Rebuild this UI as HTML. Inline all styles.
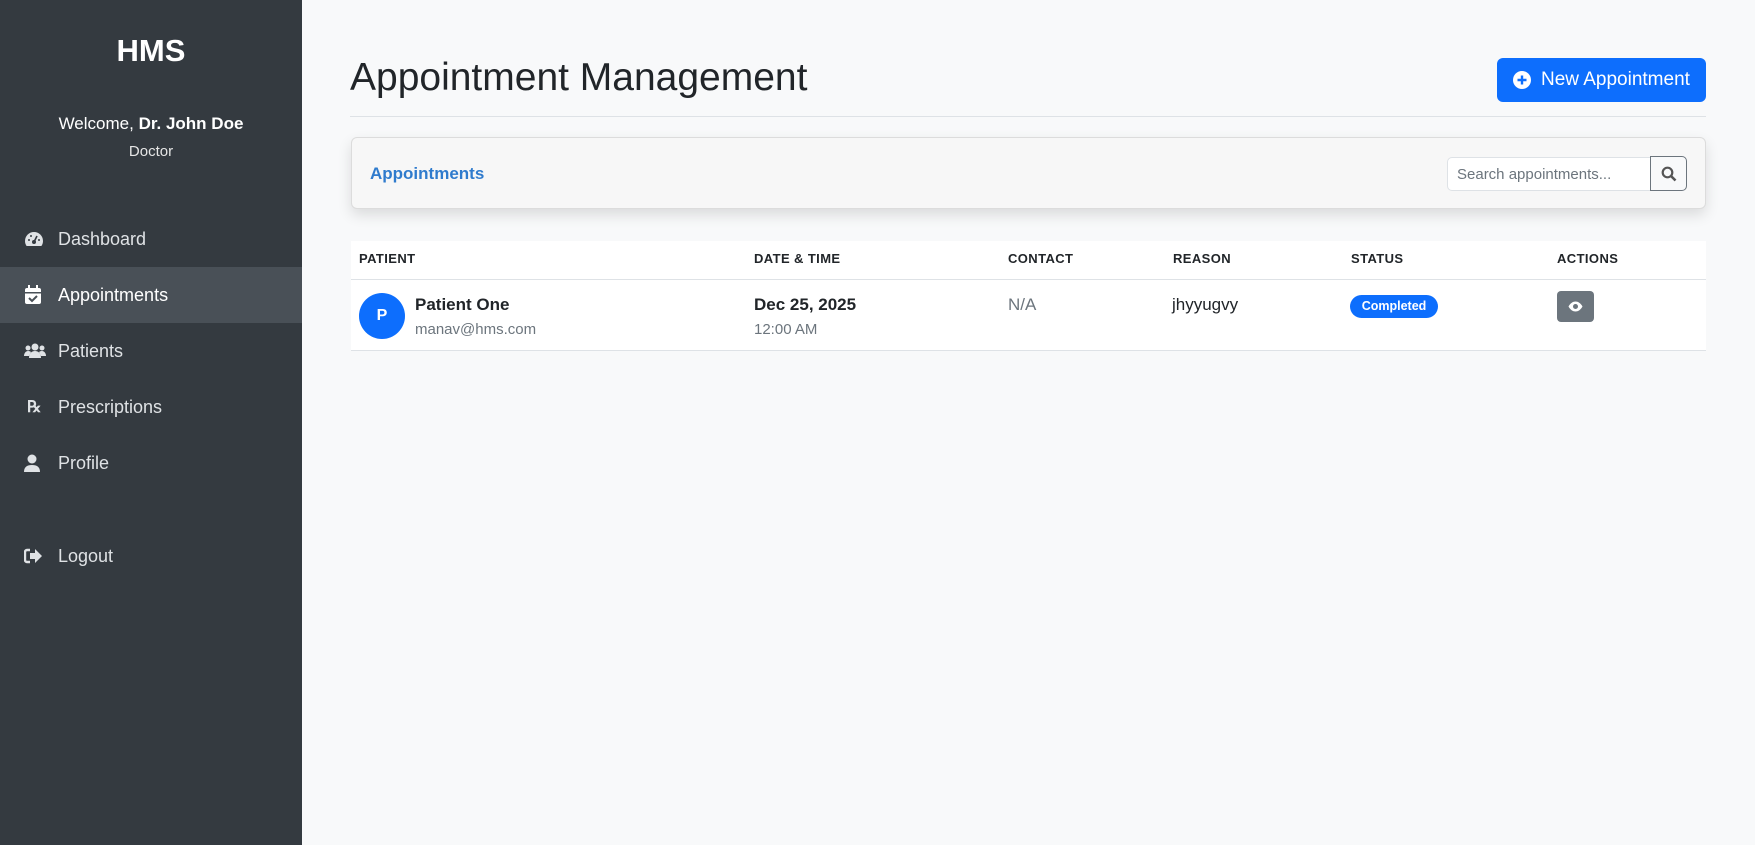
<!DOCTYPE html>
<html><head><meta charset="utf-8"><style>
*{box-sizing:border-box;margin:0;padding:0}
body{width:1755px;height:845px;font-family:"Liberation Sans",sans-serif;background:#f8f9fa;position:relative;overflow:hidden;color:#212529}
.sb{position:absolute;left:0;top:0;width:302px;height:845px;background:#343a40;color:#fff}
.abs{position:absolute}
.nav{position:absolute;left:0;width:302px;height:56px;display:flex;align-items:center;font-size:18px;color:#dfe2e5}
.nav svg{position:absolute;left:24px}
.nav span{position:absolute;left:58px}
.th{position:absolute;top:251px;font-size:13px;font-weight:bold;letter-spacing:.4px}
</style></head><body>
<div class="sb">
 <div class="abs" style="left:0;width:302px;top:33px;text-align:center;font-size:31px;font-weight:bold">HMS</div>
 <div class="abs" style="left:0;width:302px;top:114px;text-align:center;font-size:17px">Welcome, <b>Dr. John Doe</b></div>
 <div class="abs" style="left:0;width:302px;top:143px;text-align:center;font-size:15px;color:#e6e6e6">Doctor</div>
 <div class="nav" style="top:211px"><svg width="20" height="18" viewBox="0 0 20 18"><path d="M10 2a9 9 0 0 0-9 9c0 2 .6 3.6 1.6 5h14.8c1-1.4 1.6-3 1.6-5a9 9 0 0 0-9-9z" fill="#dfe2e5"/><circle cx="10" cy="12" r="2" fill="#343a40"/><path d="M10 12l3-6" stroke="#343a40" stroke-width="1.6"/><circle cx="5" cy="10" r="1" fill="#343a40"/><circle cx="7" cy="6" r="1" fill="#343a40"/><circle cx="15" cy="10" r="1" fill="#343a40"/></svg><span>Dashboard</span></div>
 <div class="nav" style="top:267px;background:#495057;color:#fff"><svg width="18" height="20" viewBox="0 0 18 20"><rect x="4" y="0" width="2" height="4" fill="#fff"/><rect x="12" y="0" width="2" height="4" fill="#fff"/><rect x="1" y="3" width="16" height="16" rx="2" fill="#fff"/><rect x="1" y="7" width="16" height="1.5" fill="#495057"/><path d="M5 13l3 3 5-5" stroke="#495057" stroke-width="2" fill="none"/></svg><span>Appointments</span></div>
 <div class="nav" style="top:323px"><svg width="22" height="16" viewBox="0 0 22 16"><circle cx="11" cy="4" r="3.5" fill="#dfe2e5"/><circle cx="4" cy="5" r="2.5" fill="#dfe2e5"/><circle cx="18" cy="5" r="2.5" fill="#dfe2e5"/><path d="M5 15c0-5 3-7 6-7s6 2 6 7z" fill="#dfe2e5"/><path d="M0 13c0-3 2-5 4-5s3 1 3 1l-2 4z" fill="#dfe2e5"/><path d="M22 13c0-3-2-5-4-5s-3 1-3 1l2 4z" fill="#dfe2e5"/></svg><span>Patients</span></div>
 <div class="nav" style="top:379px"><span style="left:27px;font-weight:bold;font-size:16px">℞</span><span>Prescriptions</span></div>
 <div class="nav" style="top:435px"><svg width="16" height="18" viewBox="0 0 16 18"><circle cx="8" cy="5" r="4.5" fill="#dfe2e5"/><path d="M0 18c0-5 3-7 8-7s8 2 8 7z" fill="#dfe2e5"/></svg><span>Profile</span></div>
 <div class="nav" style="top:528px"><svg width="18" height="16" viewBox="0 0 18 16"><path d="M6 2H3a2 2 0 0 0-2 2v8a2 2 0 0 0 2 2h3" stroke="#dfe2e5" stroke-width="2.4" fill="none"/><path d="M6 5h5V1l7 7-7 7v-4H6z" fill="#dfe2e5"/></svg><span>Logout</span></div>
</div>
<div class="abs" style="left:350px;top:56px;font-size:39px;color:#212529">Appointment Management</div>
<div class="abs" style="left:1497px;top:58px;width:209px;height:44px;background:#0d6efd;border-radius:6px;color:#fff;font-size:19px;display:flex;align-items:center"><svg style="margin-left:16px" width="18" height="18" viewBox="0 0 18 18"><circle cx="9" cy="9" r="9" fill="#fff"/><path d="M9 4.5v9M4.5 9h9" stroke="#0d6efd" stroke-width="2.4"/></svg><span style="margin-left:10px">New Appointment</span></div>
<div class="abs" style="left:350px;top:116px;width:1356px;height:1px;background:#dee2e6"></div>
<div class="abs" style="left:351px;top:137px;width:1355px;height:72px;background:#f7f7f7;border:1px solid #dcdcdc;border-radius:6px;box-shadow:0 6px 14px rgba(0,0,0,.12)"></div>
<div class="abs" style="left:370px;top:164px;font-size:17px;font-weight:bold;color:#2f7bcd">Appointments</div>
<div class="abs" style="left:1447px;top:157px;width:204px;height:34px;background:#fff;border:1px solid #dee2e6;border-radius:5px 0 0 5px;font-size:15px;color:#6c757d;padding:8px 9px">Search appointments...</div>
<div class="abs" style="left:1650px;top:156px;width:37px;height:35px;border:1px solid #6c757d;border-radius:0 5px 5px 0;background:#f8f9fa"><svg style="position:absolute;left:10px;top:9px" width="16" height="16" viewBox="0 0 16 16"><circle cx="6.5" cy="6.5" r="4.8" stroke="#555" stroke-width="2.2" fill="none"/><path d="M10 10l4.5 4.5" stroke="#555" stroke-width="2.6"/></svg></div>
<div class="abs" style="left:351px;top:241px;width:1355px;height:110px;background:#fff"></div>
<div class="abs" style="left:351px;top:279px;width:1355px;height:1px;background:#dee2e6"></div>
<div class="abs" style="left:351px;top:350px;width:1355px;height:1px;background:#dee2e6"></div>
<div class="th" style="left:359px">PATIENT</div>
<div class="th" style="left:754px">DATE &amp; TIME</div>
<div class="th" style="left:1008px">CONTACT</div>
<div class="th" style="left:1173px">REASON</div>
<div class="th" style="left:1351px">STATUS</div>
<div class="th" style="left:1557px">ACTIONS</div>
<div class="abs" style="left:359px;top:293px;width:46px;height:46px;border-radius:50%;background:#0d6efd;color:#fff;font-weight:bold;font-size:16px;text-align:center;line-height:46px">P</div>
<div class="abs" style="left:415px;top:295px;font-size:17px;font-weight:bold">Patient One</div>
<div class="abs" style="left:415px;top:321px;font-size:15px;color:#6c757d">manav@hms.com</div>
<div class="abs" style="left:754px;top:295px;font-size:17px;font-weight:bold">Dec 25, 2025</div>
<div class="abs" style="left:754px;top:321px;font-size:15px;color:#6c757d">12:00 AM</div>
<div class="abs" style="left:1008px;top:295px;font-size:17px;color:#6c757d">N/A</div>
<div class="abs" style="left:1172px;top:295px;font-size:17px">jhyyugvy</div>
<div class="abs" style="left:1350px;top:295px;width:88px;height:23px;border-radius:12px;background:#0d6efd;color:#fff;font-size:12.5px;font-weight:bold;text-align:center;line-height:23px">Completed</div>
<div class="abs" style="left:1557px;top:291px;width:37px;height:31px;border-radius:4px;background:#6c757d"><svg style="position:absolute;left:11px;top:10px" width="15" height="11" viewBox="0 0 15 11"><path d="M0.5 5.5C2.5 2 5 0.5 7.5 0.5S12.5 2 14.5 5.5C12.5 9 10 10.5 7.5 10.5S2.5 9 0.5 5.5z" fill="#fff"/><circle cx="7.5" cy="5.5" r="2.5" fill="#6c757d"/></svg></div>
</body></html>
